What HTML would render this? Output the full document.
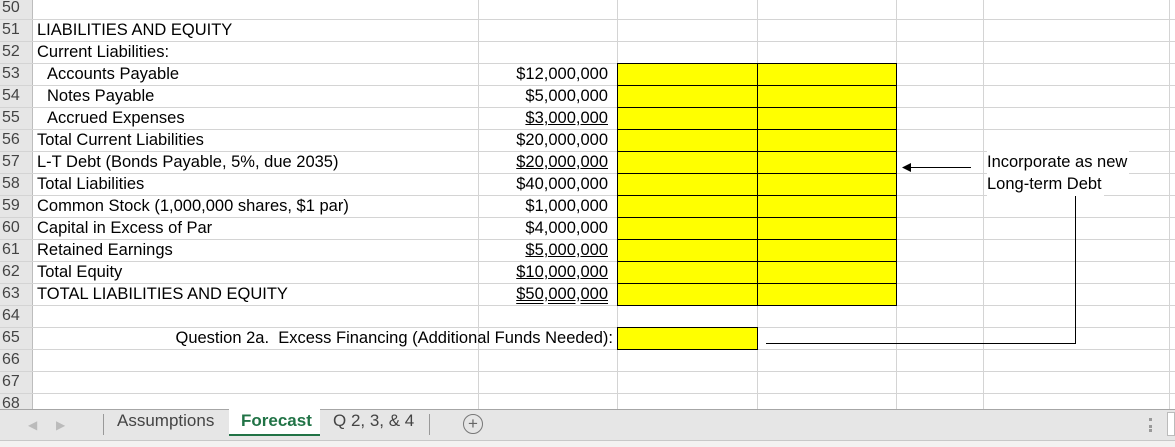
<!DOCTYPE html>
<html><head><style>
*{margin:0;padding:0;box-sizing:border-box}
body{width:1175px;height:447px;overflow:hidden;background:#fff;font-family:"Liberation Sans",Arial,sans-serif;font-size:16.5px;color:#000;position:relative}
.a{position:absolute}
.hl{position:absolute;left:0;width:1175px;height:1px;background:#d4d4d4}
.vl{position:absolute;top:0;height:410px;width:1px;background:#d4d4d4}
.rh{position:absolute;left:0;width:33px;background:#e6e6e6;height:410px;border-right:1px solid #bdbdbd}
.rn{position:absolute;left:2px;width:28px;color:#444;font-size:16px;line-height:22px}
.t{position:absolute;line-height:23px;white-space:nowrap}
.n{position:absolute;right:567px;line-height:23px;text-align:right;white-space:nowrap}
.u{text-decoration:underline}
.y{position:absolute;background:#ffff00;border:1px solid #000}
</style></head><body>
<div class="rh"></div>
<div class="vl" style="left:478px"></div>
<div class="vl" style="left:617px"></div>
<div class="vl" style="left:757px"></div>
<div class="vl" style="left:896px"></div>
<div class="vl" style="left:983px"></div>
<div class="vl" style="left:1169px"></div>
<div id="g"></div>
<script>
var h='';for(var i=0;i<19;i++){var yy=19+i*22;h+='<div class="hl" style="top:'+yy+'px"></div>';}
for(var r=50;r<=68;r++){var tp=63+(r-53)*22;h+='<div class="rn" style="top:'+tp+'px">'+r+'</div>';}
document.getElementById('g').innerHTML=h;
</script>
<div class="y" style="left:617px;top:63px;width:141px;height:243px"></div>
<div class="y" style="left:757px;top:63px;width:140px;height:243px"></div>
<script>
var s='';for(var i=1;i<11;i++){s+='<div class="a" style="left:617px;width:280px;height:1px;background:#000;top:'+(63+i*22)+'px"></div>';}
s+='<div class="a" style="left:757px;width:1px;height:243px;background:#000;top:63px"></div>';
document.write(s);
</script>
<div class="y" style="left:617px;top:327px;width:141px;height:23px"></div>
<div class="t" style="left:37px;top:19px">LIABILITIES AND EQUITY</div>
<div class="t" style="left:37px;top:41px">Current Liabilities:</div>
<div class="t" style="left:47px;top:63px">Accounts Payable</div>
<div class="t" style="left:47px;top:85px">Notes Payable</div>
<div class="t" style="left:47px;top:107px">Accrued Expenses</div>
<div class="t" style="left:37px;top:129px">Total Current Liabilities</div>
<div class="t" style="left:37px;top:151px">L-T Debt (Bonds Payable, 5%, due 2035)</div>
<div class="t" style="left:37px;top:173px">Total Liabilities</div>
<div class="t" style="left:37px;top:195px">Common Stock (1,000,000 shares, $1 par)</div>
<div class="t" style="left:37px;top:217px">Capital in Excess of Par</div>
<div class="t" style="left:37px;top:239px">Retained Earnings</div>
<div class="t" style="left:37px;top:261px">Total Equity</div>
<div class="t" style="left:37px;top:283px">TOTAL LIABILITIES AND EQUITY</div>
<div class="n" style="top:63px">$12,000,000</div>
<div class="n" style="top:85px">$5,000,000</div>
<div class="n u" style="top:107px">$3,000,000</div>
<div class="n" style="top:129px">$20,000,000</div>
<div class="n u" style="top:151px">$20,000,000</div>
<div class="n" style="top:173px">$40,000,000</div>
<div class="n" style="top:195px">$1,000,000</div>
<div class="n" style="top:217px">$4,000,000</div>
<div class="n u" style="top:239px">$5,000,000</div>
<div class="n u" style="top:261px">$10,000,000</div>
<div class="n u" style="top:283px;text-decoration:underline double">$50,000,000</div>
<div class="n" style="top:327px;right:562px">Question 2a.&nbsp; Excess Financing (Additional Funds Needed):</div>
<div class="t" style="left:987px;top:151px;background:#fff;padding-right:2px">Incorporate as new</div>
<div class="t" style="left:987px;top:173px;background:#fff;padding-right:2px">Long-term Debt</div>
<svg class="a" style="left:0;top:0" width="1175" height="410">
<line x1="906" y1="167.5" x2="971" y2="167.5" stroke="#000" stroke-width="1"/>
<polygon points="902,167.5 911,163 911,172" fill="#000"/>
<line x1="1075.5" y1="196" x2="1075.5" y2="343" stroke="#000"/>
<line x1="766" y1="343.5" x2="1076" y2="343.5" stroke="#000"/>
</svg>
<div class="a" style="left:0;top:409px;width:1175px;height:31px;background:#e6e6e6;border-top:1px solid #a6a6a6"></div>
<div class="a" style="left:0;top:440px;width:1175px;height:7px;background:#f3f2f1;border-top:1px solid #c8c8c8"></div>
<div class="a" style="left:28px;top:418px;color:#bbb;font-size:12px">&#9664;</div>
<div class="a" style="left:56px;top:418px;color:#bbb;font-size:12px">&#9654;</div>
<div class="a" style="left:103px;top:414px;width:1px;height:21px;background:#999"></div>
<div class="a" style="left:117px;top:410px;color:#444;line-height:22px;font-size:17px">Assumptions</div>
<div class="a" style="left:229px;top:409px;width:91px;height:27px;background:#fff;border-bottom:2px solid #217346"></div>
<div class="a" style="left:241px;top:410px;color:#217346;font-weight:bold;line-height:22px;font-size:17px">Forecast</div>
<div class="a" style="left:333px;top:410px;color:#444;line-height:22px;font-size:17px">Q 2, 3, &amp; 4</div>
<div class="a" style="left:429px;top:414px;width:1px;height:21px;background:#999"></div>
<div class="a" style="left:463px;top:414px;width:20px;height:20px;border:1px solid #777;border-radius:50%;text-align:center;line-height:17px;color:#666;font-size:17px">+</div>
<div class="a" style="left:1149px;top:418px;width:3px;height:14px;border-top:3px dotted #999;border-bottom:3px dotted #999;background:linear-gradient(#fff0 4px,#999 4px,#999 7px,#fff0 7px)"></div>
<div class="a" style="left:1167px;top:412px;width:8px;height:24px;background:#fff;border:1px solid #bbb"></div>
</body></html>
